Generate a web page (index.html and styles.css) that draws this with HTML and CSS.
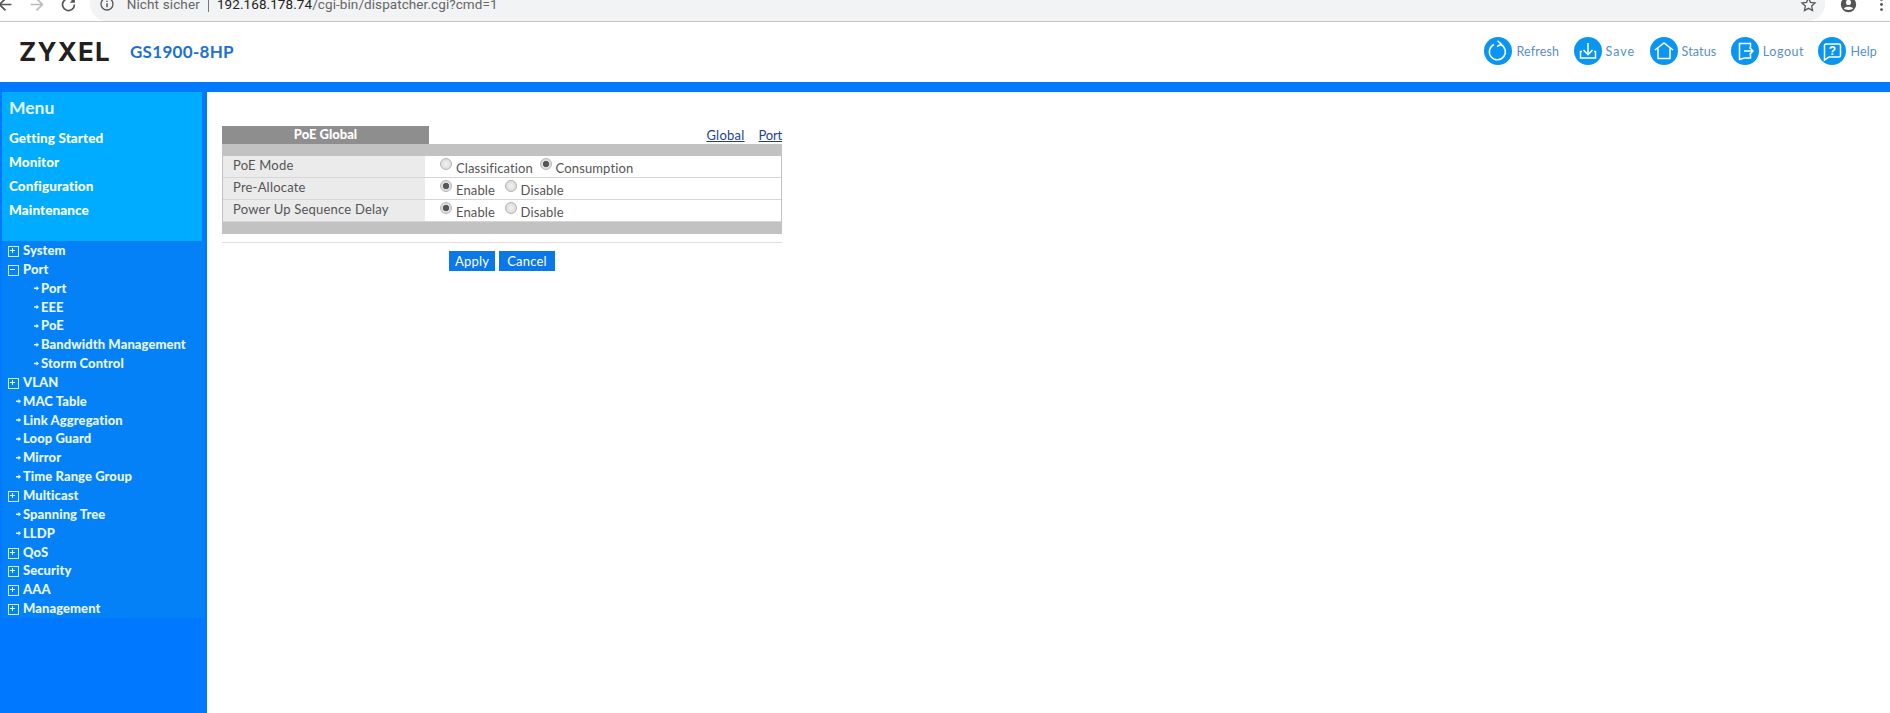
FILE: index.html
```html
<!DOCTYPE html>
<html lang="de">
<head>
<meta charset="utf-8">
<title>GS1900-8HP</title>
<link rel="stylesheet" href="styles.css">
</head>
<body>
<div class="chrome">
  <div class="chrome-row">
    <svg class="c-ico back" viewBox="0 0 20 20"><path d="M17 10H4M10 3l-7 7 7 7" fill="none" stroke="#555" stroke-width="2"/></svg>
    <svg class="c-ico fwd" viewBox="0 0 20 20"><path d="M3 10h13M10 3l7 7-7 7" fill="none" stroke="#bbb" stroke-width="2"/></svg>
    <svg class="c-ico rel" viewBox="0 0 20 20"><path d="M16 6.500A7 7 0 1 0 17 10" fill="none" stroke="#555" stroke-width="2"/><path d="M17.500 2v6h-6z" fill="#555"/></svg>
    <div class="pill">
      <svg class="c-ico info" viewBox="0 0 20 20"><circle cx="10" cy="10" r="7.500" fill="none" stroke="#555" stroke-width="1.600"/><path d="M10 9v5M10 6v1.600" stroke="#555" stroke-width="1.800"/></svg>
      <span class="insecure">Nicht sicher</span>
      <span class="pipe"></span>
      <span class="url">192.168.178.74<span class="path">/cgi-bin/dispatcher.cgi?cmd=1</span></span>
      <svg class="c-ico star" viewBox="0 0 20 20"><path d="M10 2.500l2.300 5 5.400.6-4 3.700 1.100 5.400L10 14.500l-4.800 2.700 1.100-5.400-4-3.700 5.400-.6z" fill="none" stroke="#555" stroke-width="1.500"/></svg>
    </div>
    <svg class="c-ico avatar" viewBox="0 0 20 20"><circle cx="10" cy="10" r="9" fill="#555"/><circle cx="10" cy="7.500" r="3" fill="#fff"/><path d="M4.500 14.500c1.500-2.500 9.500-2.500 11 0-1.500 2.500-9.500 2.500-11 0z" fill="#fff"/></svg>
    <svg class="c-ico dots" viewBox="0 0 20 20"><circle cx="10" cy="4" r="1.700" fill="#555"/><circle cx="10" cy="10" r="1.700" fill="#555"/><circle cx="10" cy="16" r="1.700" fill="#555"/></svg>
  </div>
</div>

<header class="top">
  <div class="brand"><span class="logo">ZYXEL</span><span class="model">GS1900-8HP</span></div>
  <nav class="tools">
    <a class="tool"><svg class="t-ico" viewBox="0 0 28 28"><circle cx="14" cy="14" r="14" fill="#0a96f0"/><path d="M10 7.500a8 8 0 1 0 6-.3" fill="none" stroke="#fff" stroke-width="1.500"/><path d="M13.500 3.800l3.800 3.300-4.200 2.400" fill="none" stroke="#fff" stroke-width="1.500"/></svg><span>Refresh</span></a>
    <a class="tool save"><svg class="t-ico" viewBox="0 0 28 28"><circle cx="14" cy="14" r="14" fill="#0a96f0"/><path d="M14 6v11.500M9.500 13l4.500 4.700 4.500-4.700" fill="none" stroke="#fff" stroke-width="1.500"/><path d="M8 14.500H6.500v6.500h15v-6.500H20" fill="none" stroke="#fff" stroke-width="1.500"/></svg><span>Save</span></a>
    <a class="tool"><svg class="t-ico" viewBox="0 0 28 28"><circle cx="14" cy="14" r="14" fill="#0a96f0"/><path d="M5 13l9-7 9 7M8 11.500V21.500h12V11.500" fill="none" stroke="#fff" stroke-width="1.500"/></svg><span>Status</span></a>
    <a class="tool logout"><svg class="t-ico" viewBox="0 0 28 28"><circle cx="14" cy="14" r="14" fill="#0a96f0"/><path d="M19.500 10.500V6.500H8.500v16l5-1.500h6v-3.500" fill="none" stroke="#fff" stroke-width="1.500"/><path d="M13 14h9M18.500 10.500l3.500 3.500-3.500 3.500" fill="none" stroke="#fff" stroke-width="1.500"/></svg><span>Logout</span></a>
    <a class="tool"><svg class="t-ico" viewBox="0 0 28 28"><circle cx="14" cy="14" r="14" fill="#0a96f0"/><path d="M8 7h13a1.500 1.500 0 0 1 1.500 1.500v10a1.500 1.500 0 0 1-1.500 1.500H11l-4.500 3v-15A1.500 1.500 0 0 1 8 7z" fill="none" stroke="#fff" stroke-width="1.500"/><text x="14.500" y="18" class="t-q">?</text></svg><span>Help</span></a>
  </nav>
</header>
<div class="band"></div>

<div class="main">
  <aside class="side">
    <div class="menu">
      <h2>Menu</h2>
      <a>Getting Started</a>
      <a>Monitor</a>
      <a>Configuration</a>
      <a>Maintenance</a>
    </div>
    <ul class="tree">
      <li class="plus">System</li>
      <li class="minus">Port</li>
      <li class="leaf sub">Port</li>
      <li class="leaf sub">EEE</li>
      <li class="leaf sub">PoE</li>
      <li class="leaf sub">Bandwidth Management</li>
      <li class="leaf sub">Storm Control</li>
      <li class="plus">VLAN</li>
      <li class="leaf">MAC Table</li>
      <li class="leaf">Link Aggregation</li>
      <li class="leaf">Loop Guard</li>
      <li class="leaf">Mirror</li>
      <li class="leaf">Time Range Group</li>
      <li class="plus">Multicast</li>
      <li class="leaf">Spanning Tree</li>
      <li class="leaf">LLDP</li>
      <li class="plus">QoS</li>
      <li class="plus">Security</li>
      <li class="plus">AAA</li>
      <li class="plus">Management</li>
    </ul>
  </aside>

  <main class="content">
    <div class="panel">
      <div class="tabs">
        <div class="title">PoE Global</div>
        <div class="links"><a>Global</a><a>Port</a></div>
      </div>
      <div class="bar"></div>
      <div class="rows">
        <div class="row">
          <div class="label">PoE Mode</div>
          <div class="value"><span class="radio"></span><span class="opt w-class">Classification</span><span class="radio on"></span><span class="opt">Consumption</span></div>
        </div>
        <div class="row">
          <div class="label">Pre-Allocate</div>
          <div class="value"><span class="radio on"></span><span class="opt w-en">Enable</span><span class="radio"></span><span class="opt">Disable</span></div>
        </div>
        <div class="row">
          <div class="label">Power Up Sequence Delay</div>
          <div class="value"><span class="radio on"></span><span class="opt w-en">Enable</span><span class="radio"></span><span class="opt">Disable</span></div>
        </div>
      </div>
      <div class="bar"></div>
      <div class="rule"></div>
      <div class="buttons"><button class="btn apply">Apply</button><button class="btn cancel">Cancel</button></div>
    </div>
  </main>
</div>
</body>
</html>
```
FILE: styles.css
```css
* { box-sizing: border-box; }
html, body { margin: 0; height: 100%; overflow: hidden; background: #fff; }
body { display: flex; flex-direction: column; font-family: "Lato", "Liberation Sans", sans-serif; }

/* browser toolbar, cut off by the top of the picture */
.chrome { height: 22px; flex: none; overflow: hidden; border-bottom: 1px solid #c4c4c4; background: #fff; }
.chrome-row { height: 34px; margin-top: -13px; display: flex; align-items: center; }
.c-ico { width: 17px; height: 17px; flex: none; }
.back { margin-left: -3px; }
.fwd { margin-left: 13.500px; }
.rel { margin-left: 15px; }
.pill { margin-left: 13.500px; width: 1735px; height: 34px; border-radius: 0 0 17px 17px; background: #f1f3f4; display: flex; align-items: center; padding-left: 9px; font: 13.500px "Roboto", sans-serif; color: #666; }
.info { width: 16px; height: 16px; }
.insecure { margin-left: 11.700px; letter-spacing: .13px; }
.pipe { width: 1px; height: 16px; background: #777; margin: 0 8px; }
.url { color: #222; letter-spacing: .08px; }
.path { color: #666; }
.star { margin-left: auto; margin-right: 8.500px; }
.avatar { margin-left: 14.500px; }
.dots { margin-left: 16px; }

/* header */
.top { height: 60px; flex: none; display: flex; align-items: center; justify-content: space-between; padding: 0 13px 2px 19px; }
.brand { display: flex; align-items: center; }
.logo { font: 700 26px "Inter", "Liberation Sans", sans-serif; letter-spacing: 1.200px; color: #231f20; }
.model { margin-left: 19px; font: 700 17px "Lato", sans-serif; color: #1e6fcf; letter-spacing: .3px; }
.tools { display: flex; gap: 14.400px; }
.tool { display: flex; align-items: center; gap: 4px; font-size: 12.500px; color: #5a8fc4; letter-spacing: .15px; }
.save { letter-spacing: 1px; }
.logout { letter-spacing: .55px; }
.t-ico { width: 28px; height: 28px; flex: none; }
.t-q { font: 700 12px "Liberation Sans", sans-serif; fill: #fff; text-anchor: middle; }
.band { height: 10px; flex: none; background: #0078ff; }

/* layout */
.main { flex: 1; display: flex; min-height: 0; }
.side { width: 207px; flex: none; background: #0078ff; padding-left: 2px; }
.menu { width: 200px; height: 149px; background: #00acff; padding: 4px 0 0 7px; display: flex; flex-direction: column; color: #fff; }
.menu h2 { margin: 0 0 6px; font-size: 17.500px; font-weight: 700; line-height: 24px; color: #e4f6ff; }
.menu a { font-size: 13.500px; font-weight: 900; line-height: 24px; letter-spacing: .1px; }

.tree { list-style: none; margin: 0; padding: 0; width: 202px; background: #0481f6; color: #e6f6ff; }
.tree li { height: 18.850px; line-height: 19.500px; padding-left: 21px; font-size: 13px; font-weight: 900; letter-spacing: .07px; position: relative; white-space: nowrap; }
.tree li.sub { padding-left: 39px; }
.plus::before, .minus::before { content: ""; position: absolute; left: 6px; top: 5px; width: 9px; height: 9px; border: 1px solid #cfe9ff; }
.plus::after, .minus::after { content: ""; position: absolute; left: 8px; top: 7px; width: 5px; height: 5px; }
.plus::after { background: linear-gradient(#e6f6ff, #e6f6ff) center / 100% 1px no-repeat, linear-gradient(#e6f6ff, #e6f6ff) center / 1px 100% no-repeat; }
.minus::after { background: linear-gradient(#e6f6ff, #e6f6ff) center / 100% 1px no-repeat; }
.leaf::before { content: ""; position: absolute; left: 14px; top: 7px; width: 5px; height: 5px; background: #e6f6ff; clip-path: polygon(0 35%, 50% 35%, 50% 5%, 100% 50%, 50% 95%, 50% 65%, 0 65%); }
.leaf.sub::before { left: 32px; }

/* content */
.content { flex: 1; padding: 34px 0 0 15px; }
.panel { width: 560px; font-size: 13px; color: #555; letter-spacing: .2px; }
.tabs { display: flex; justify-content: space-between; align-items: flex-end; height: 18px; }
.title { width: 207px; height: 18px; line-height: 17px; background: #8e8e8e; color: #fff; text-align: center; font-weight: 900; font-size: 13px; letter-spacing: 0; }
.links { display: flex; gap: 14px; padding-bottom: 1px; }
.links a { color: #1c3f94; text-decoration: underline; font-size: 13px; letter-spacing: .25px; }
.links a + a { letter-spacing: -.2px; }
.bar { height: 12px; background: #c2c2c2; }
.rows { border: solid #c2c2c2; border-width: 0 1px; }
.row { height: 22px; display: flex; border-bottom: 1px solid #d6d6d6; }
.label { width: 202px; background: #ebebeb; padding: 0 0 3px 10px; line-height: 18px; }
.value { flex: 1; display: flex; align-items: center; padding: 1px 0 0 15px; }
.radio { width: 12px; height: 12px; flex: none; border-radius: 50%; border: 1px solid #b4b4b4; background: radial-gradient(circle, #f2f2f2, #d4d4d4); margin: -6px 4px 0 0; }
.radio.on { background: radial-gradient(circle, #555 0 2.800px, #ddd 3.500px); }
.opt { padding-top: 1px; letter-spacing: .12px; }
.w-class { width: 83.600px; }
.w-en { width: 48.600px; }
.rule { height: 1px; background: #ddd; margin-top: 8px; }
.buttons { display: flex; gap: 4px; margin: 8px 0 0 227px; }
.btn { height: 20px; border: 0; padding: 0; background: #0a78e6; color: #fff; font: 400 13px "Lato", sans-serif; letter-spacing: .2px; }
.apply { width: 46px; }
.cancel { width: 56px; }
```
